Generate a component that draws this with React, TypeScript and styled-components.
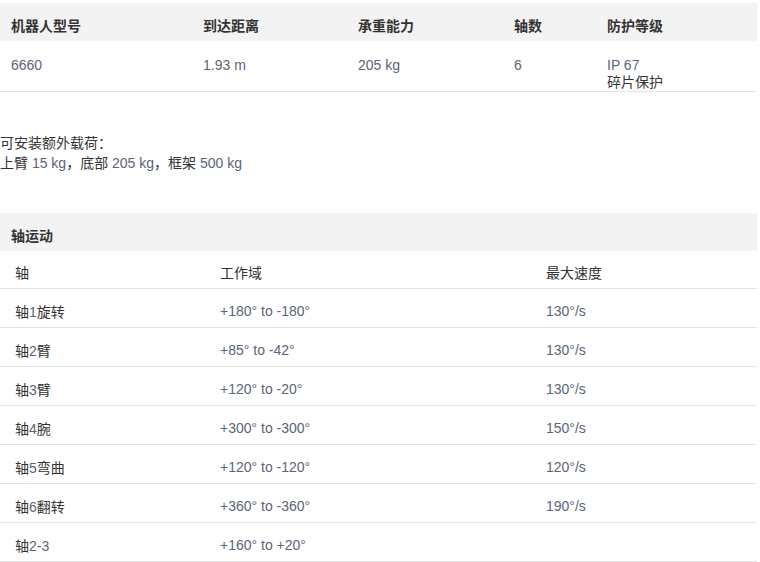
import React from "react";
import styled, { createGlobalStyle } from "styled-components";

const Global = createGlobalStyle`
  body { margin: 0; background: #fff; font-family: "Liberation Sans", "Noto Sans CJK SC", sans-serif; font-size: 14px; color: #333; }
`;
const Page = styled.div` width: 757px; padding-top: 3px; `;
const Grid = styled.div<{ cols: string }>` display: grid; grid-template-columns: ${p => p.cols}; `;
const HeadRow = styled(Grid)` background: #f3f3f3; height: 38px; box-sizing: border-box; align-items: center; padding: 5px 0 0 11px; font-weight: bold; color: #333; `;
const DataRow = styled(Grid)` padding: 16px 0 0 11px; height: 34px; border-bottom: 1px solid #e3e3e3; line-height: 17px; `;
const Num = styled.span` color: #5b6478; `;
const Note = styled.div` margin-top: 41px; line-height: 20px; `;
const Comma = styled.span` display: inline-block; width: 14px; `;
const SectionHead = styled.div` margin-top: 40px; background: #f3f3f3; height: 38px; box-sizing: border-box; display: flex; align-items: center; padding: 5px 0 0 11px; font-weight: bold; `;
const Row = styled(Grid)` height: 38px; box-sizing: content-box; align-items: center; padding: 0 0 0 15px; border-bottom: 1px solid #e3e3e3; > * { padding-top: 6px; } `;
const SubRow = styled(Row)` height: 37px; > * { padding-top: 4px; } `;

const cols1 = "192px 155px 156px 93px 1fr";
const cols2 = "205px 326px 1fr";
const N = ({ c }: { c: string }) => <Num>{c}</Num>;

const rows: [React.ReactNode, string, string][] = [
  [<>轴<N c="1" />旋转</>, "+180° to -180°", "130°/s"],
  [<>轴<N c="2" />臂</>, "+85° to -42°", "130°/s"],
  [<>轴<N c="3" />臂</>, "+120° to -20°", "130°/s"],
  [<>轴<N c="4" />腕</>, "+300° to -300°", "150°/s"],
  [<>轴<N c="5" />弯曲</>, "+120° to -120°", "120°/s"],
  [<>轴<N c="6" />翻转</>, "+360° to -360°", "190°/s"],
  [<>轴<N c="2-3" /></>, "+160° to +20°", ""],
];

export default function App() {
  return (
    <Page>
      <Global />
      <HeadRow cols={cols1}>
        <div>机器人型号</div><div>到达距离</div><div>承重能力</div><div>轴数</div><div>防护等级</div>
      </HeadRow>
      <DataRow cols={cols1}>
        <N c="6660" /><N c="1.93 m" /><N c="205 kg" /><N c="6" />
        <div><N c="IP 67" /><br />碎片保护</div>
      </DataRow>
      <Note>
        可安装额外载荷：<br />
        上臂 <N c="15 kg" /><Comma>，</Comma>底部 <N c="205 kg" /><Comma>，</Comma>框架 <N c="500 kg" />
      </Note>
      <SectionHead>轴运动</SectionHead>
      <SubRow cols={cols2}><div>轴</div><div>工作域</div><div>最大速度</div></SubRow>
      {rows.map((r, i) => (
        <Row cols={cols2} key={i}><div>{r[0]}</div><N c={r[1]} /><N c={r[2]} /></Row>
      ))}
    </Page>
  );
}
